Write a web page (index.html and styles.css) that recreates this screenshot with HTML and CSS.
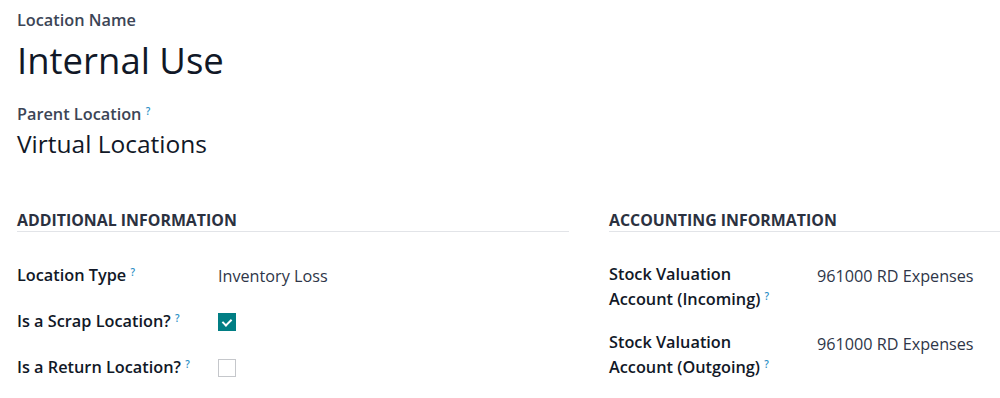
FILE: index.html
```html
<!DOCTYPE html>
<html lang="en">
<head>
    <meta charset="UTF-8">
    <meta name="viewport" content="width=device-width, initial-scale=1.0">
    <title>Internal Use</title>
    <link rel="stylesheet" href="styles.css">
</head>
<body>
    <div class="sheet">
        <div class="title-block">
            <label class="title-label">Location Name</label>
            <h1 class="title">Internal Use</h1>
        </div>

        <div class="parent-block">
            <label class="title-label">Parent Location <sup class="help">?</sup></label>
            <div class="parent-value">Virtual Locations</div>
        </div>

        <div class="groups">
            <div class="group">
                <div class="group-title">Additional Information</div>
                <div class="rows">
                    <div class="row">
                        <div class="field-label">Location Type <sup class="help">?</sup></div>
                        <div class="field-value">Inventory Loss</div>
                    </div>
                    <div class="row">
                        <div class="field-label">Is a Scrap Location? <sup class="help">?</sup></div>
                        <div class="field-value"><span class="check checked"></span></div>
                    </div>
                    <div class="row">
                        <div class="field-label">Is a Return Location? <sup class="help">?</sup></div>
                        <div class="field-value"><span class="check"></span></div>
                    </div>
                </div>
            </div>

            <div class="group">
                <div class="group-title">Accounting Information</div>
                <div class="rows">
                    <div class="row tall">
                        <div class="field-label wide">Stock Valuation Account (Incoming) <sup class="help">?</sup></div>
                        <div class="field-value">961000 RD Expenses</div>
                    </div>
                    <div class="row tall">
                        <div class="field-label wide">Stock Valuation Account (Outgoing) <sup class="help">?</sup></div>
                        <div class="field-value">961000 RD Expenses</div>
                    </div>
                </div>
            </div>
        </div>
    </div>
</body>
</html>
```

FILE: styles.css
```css
body {
    margin: 0;
    font-family: "Open Sans", "Noto Sans", sans-serif;
    background-color: #fff;
    color: #1f2533;
}

.sheet {
    padding: 9px 0 0 17px;
}

.title-label {
    display: block;
    font-size: 16.3px;
    font-weight: 600;
    color: #3c4556;
    line-height: 22px;
}

.title {
    margin: 4px 0 0;
    font-size: 36.5px;
    font-weight: 400;
    line-height: 50px;
    color: #111827;
}

.parent-block {
    margin-top: 18px;
}

.parent-value {
    margin-top: 4px;
    font-size: 24.5px;
    line-height: 30px;
    color: #111827;
}

.help {
    font-size: 10px;
    font-weight: 600;
    color: #2a8fc6;
    vertical-align: top;
    position: relative;
    top: -3px;
}

.groups {
    display: grid;
    grid-template-columns: 552px 1fr;
    gap: 40px;
    margin-top: 50px;
}

.group-title {
    font-size: 15.9px;
    font-weight: 700;
    text-transform: uppercase;
    color: #2b3140;
    line-height: 22px;
    border-bottom: 1px solid #e2e4e8;
}

.rows {
    padding-top: 30px;
}

.row {
    display: flex;
    min-height: 46px;
}

.row.tall {
    min-height: 0;
    padding-bottom: 18px;
}

.field-label {
    width: 201px;
    font-size: 16.3px;
    font-weight: 600;
    color: #111827;
    line-height: 26px;
}

.row.tall .field-label {
    line-height: 25px;
}

.field-label.wide {
    width: 182px;
    margin-right: 26px;
}

.field-value {
    font-size: 16.2px;
    color: #2e3648;
    line-height: 26px;
    padding-top: 1px;
}

.check {
    display: inline-block;
    width: 16px;
    height: 16px;
    margin-top: 4px;
    border: 1px solid #c5c7cb;
    vertical-align: top;
}

.check.checked {
    background-color: #017e84;
    border-color: #017e84;
    position: relative;
}

.check.checked::after {
    content: "";
    position: absolute;
    left: 5px;
    top: 3px;
    width: 4px;
    height: 7px;
    border: solid #fff;
    border-width: 0 2px 2px 0;
    transform: rotate(45deg);
}
```
